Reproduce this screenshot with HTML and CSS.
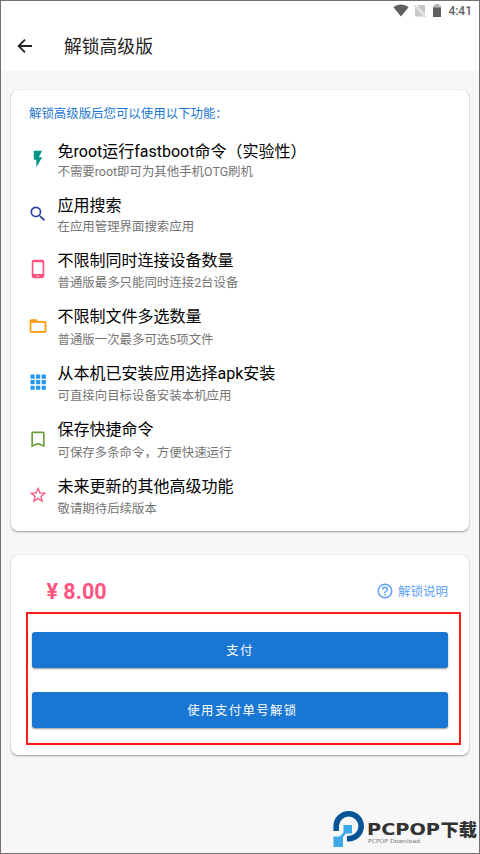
FILE: index.html
```html
<!DOCTYPE html>
<html lang="zh-CN">
<head>
<meta charset="utf-8">
<title>解锁高级版</title>
<link rel="stylesheet" href="styles.css">
</head>
<body>
<div class="screen">
  <header class="header">
    <div class="status">
      <svg class="wifi" width="16" height="13" viewBox="0 0 16 13"><path d="M.4 3.2C4.8-.5 11.200-.5 15.600 3.200L8 12.600z" fill="#606060"/></svg>
      <svg class="sim" width="12" height="13" viewBox="0 0 12 13"><path d="M4 1h7v9.500L3 2zM1 3.500 9.500 12.500H1z" fill="#c8c8c8"/><path d="M.3 1.300l11 11.500" stroke="#b5b5b5" stroke-width="1"/></svg>
      <svg class="battery" width="8" height="13" viewBox="0 0 8 13"><path d="M0 1.500h2V0h4v1.500h2V4H0z" fill="#b5b5b5"/><path d="M0 3.500h8V13H0z" fill="#606060"/></svg>
      <span>4:41</span>
    </div>
    <div class="toolbar">
      <svg width="16" height="16" viewBox="0 0 16 16"><path d="M15 8H2M8 1.600 1.600 8 8 14.400" fill="none" stroke="#222" stroke-width="1.800"/></svg>
      <h1>解锁高级版</h1>
    </div>
  </header>
  <main>
    <section class="card features">
      <h2>解锁高级版后您可以使用以下功能：</h2>
      <ul>
        <li class="item compact"><svg class="icon" viewBox="0 0 24 24"><path fill="#009688" d="M7 2v11h3v9l7-12h-4l4-8z"/></svg><div><h3>免root运行fastboot命令（实验性）</h3><p>不需要root即可为其他手机OTG刷机</p></div></li>
        <li class="item compact"><svg class="icon" viewBox="0 0 24 24"><path fill="#303f9f" d="M15.500 14h-.79l-.28-.27A6.500 6.500 0 1 0 13.730 14.430l.27.28v.79l5 4.990L20.490 19zm-6 0a4.500 4.500 0 1 1 0-9 4.500 4.500 0 0 1 0 9z"/></svg><div><h3>应用搜索</h3><p>在应用管理界面搜索应用</p></div></li>
        <li class="item"><svg class="icon" viewBox="0 0 24 24"><path fill="#ff4f7e" fill-rule="evenodd" d="M7 1h10a2.500 2.500 0 0 1 2.500 2.500v17A2.500 2.500 0 0 1 17 23H7a2.500 2.500 0 0 1-2.500-2.500v-17A2.500 2.500 0 0 1 7 1zM6.500 4v14h11V4zM10 20v1h4v-1z"/></svg><div><h3>不限制同时连接设备数量</h3><p>普通版最多只能同时连接2台设备</p></div></li>
        <li class="item"><svg class="icon" viewBox="0 0 24 24"><path fill="#ff9800" d="M20 6h-8l-2-2H4c-1.100 0-2 .9-2 2v12c0 1.100.9 2 2 2h16c1.100 0 2-.9 2-2V8c0-1.100-.9-2-2-2zm0 12H4V8h16z"/></svg><div><h3>不限制文件多选数量</h3><p>普通版一次最多可选5项文件</p></div></li>
        <li class="item"><svg class="icon" viewBox="0 0 24 24"><path fill="#2196f3" d="M3 3h5v5H3zm6.700 0h5v5h-5zm6.700 0h5v5h-5zM3 9.700h5v5H3zm6.700 0h5v5h-5zm6.700 0h5v5h-5zM3 16.400h5v5H3zm6.700 0h5v5h-5zm6.700 0h5v5h-5z"/></svg><div><h3>从本机已安装应用选择apk安装</h3><p>可直接向目标设备安装本机应用</p></div></li>
        <li class="item"><svg class="icon" viewBox="0 0 24 24"><path fill="#689f38" d="M18 3H6a2 2 0 0 0-2 2v17l8-3.400 8 3.400V5a2 2 0 0 0-2-2zm0 16-6-2.600L6 19V5h12z"/></svg><div><h3>保存快捷命令</h3><p>可保存多条命令，方便快速运行</p></div></li>
        <li class="item"><svg class="icon" viewBox="0 0 24 24"><path fill="#ff5b83" d="m22 9.240-7.190-.62L12 2 9.190 8.630 2 9.240l5.460 4.730L5.820 21 12 17.270 18.180 21l-1.630-7.030zM12 15.400l-3.760 2.270 1-4.280-3.320-2.880 4.380-.38L12 6.100l1.710 4.040 4.380.38-3.320 2.880 1 4.280z"/></svg><div><h3>未来更新的其他高级功能</h3><p>敬请期待后续版本</p></div></li>
      </ul>
    </section>
    <section class="card purchase">
      <div class="price-row">
        <strong>¥ 8.00</strong>
        <a class="help"><svg width="18" height="18" viewBox="0 0 24 24"><path fill="#5c9ff5" d="M11 18h2v-2h-2zm1-16a10 10 0 1 0 0 20 10 10 0 0 0 0-20zm0 18a8 8 0 1 1 0-16 8 8 0 0 1 0 16zm0-14a4 4 0 0 0-4 4h2a2 2 0 1 1 4 0c0 2-3 1.750-3 5h2c0-2.250 3-2.500 3-5a4 4 0 0 0-4-4z"/></svg><span>解锁说明</span></a>
      </div>
      <button>支付</button>
      <button class="redeem">使用支付单号解锁</button>
      <div class="highlight"></div>
    </section>
  </main>
  <svg class="watermark" width="146" height="38" viewBox="0 0 146 38">
    <path d="M3.200 20.500V15.500A12.500 12.500 0 1 1 15.700 28.200H14" transform="translate(1 .5)" fill="none" stroke="#075596" stroke-width="5.600"/>
    <path d="M11.500 15h8.500v8.500h-6l-3 3.500v10H1.500V26.500h6l4-4z" fill="#3da9e8"/>
    <text class="brand" x="35" y="25" textLength="73" lengthAdjust="spacingAndGlyphs">PCPOP</text>
    <text class="brand-cn" x="108.500" y="25.500" textLength="36.500" lengthAdjust="spacingAndGlyphs">下载</text>
    <text class="brand-sub" x="36" y="32.500" textLength="52" lengthAdjust="spacingAndGlyphs">PCPOP Download</text>
  </svg>
</div>
</body>
</html>
```
FILE: styles.css
```css
* { box-sizing: border-box; margin: 0; padding: 0; }
body { font-family: Roboto, "Noto Sans CJK SC", sans-serif; }
.screen { position: relative; height: 854px; border: 1px solid #766f70; background: #f7f7f7; overflow: hidden; }
.header { height: 70px; background: #fff; }
.status { height: 20px; display: flex; justify-content: flex-end; align-items: center; padding-right: 7px; font-size: 12px; font-weight: 500; color: #606060; }
.status svg { margin-top: -1px; }
.status .wifi { margin-right: 5.500px; }
.status .sim { margin-right: 7px; }
.status .battery { margin-right: 7px; }
.toolbar { height: 50px; display: flex; align-items: center; padding: 0 0 0 16px; }
.toolbar svg { margin-top: -1px; }
.toolbar h1 { margin: 2px 0 0 31px; font-size: 17.800px; font-weight: 400; color: #222; line-height: 26px; }
main { padding: 19px 10px 0; display: flex; flex-direction: column; gap: 24px; }
.card { background: #fff; border-radius: 7px; box-shadow: 0 1px 2px rgba(0,0,0,.36), 0 0 1px rgba(0,0,0,.2); }
.features { height: 441px; padding: 14px 18px 0; }
.features h2 { font-size: 12.430px; line-height: 20px; font-weight: 400; color: #1976d2; }
ul { list-style: none; padding-top: 15.500px; }
.item { display: flex; height: 56.500px; }
.item.compact { height: 54.500px; }
.icon { width: 20px; height: 20px; margin: 10.500px 10px 0 -1.500px; flex: none; }
.compact .icon { margin-top: 9.500px; }
.item h3 { font-size: 16px; line-height: 24px; font-weight: 400; color: #000; }
.item p { font-size: 12.430px; line-height: 20px; color: #757575; margin-top: .5px; }
.compact p { margin-top: -1.500px; }
.purchase { position: relative; height: 200px; padding: 22px 21px 0; }
.price-row { display: flex; justify-content: space-between; align-items: center; height: 28px; padding-left: 14.500px; margin-bottom: 27px; }
.price-row strong { padding-top: 1px; font-size: 21.500px; font-weight: 700; color: #ff5480; }
.help { display: flex; align-items: center; gap: 4px; font-size: 12.500px; color: #5c9ff5; }
.help span { margin-top: -1px; }
button { display: block; width: 100%; height: 36px; margin-bottom: 24px; border: 0; border-radius: 3px; background: #1976d2; color: #fff; font: 400 12.400px Roboto, "Noto Sans CJK SC", sans-serif; letter-spacing: 1.400px; box-shadow: 0 1px 2px rgba(0,0,0,.4); }
.redeem { padding-left: 5px; }
.highlight { position: absolute; left: 15px; top: 57px; width: 435px; height: 133px; border: 2px solid #ff1a1a; }
.watermark { position: absolute; left: 331px; top: 808.500px; }
.brand { font: 700 16px "DejaVu Sans", sans-serif; fill: #333; }
.brand-cn { font: 900 17px "Noto Sans CJK SC", sans-serif; fill: #333; }
.brand-sub { font: 400 5.500px "DejaVu Sans", sans-serif; fill: #777; }
```
